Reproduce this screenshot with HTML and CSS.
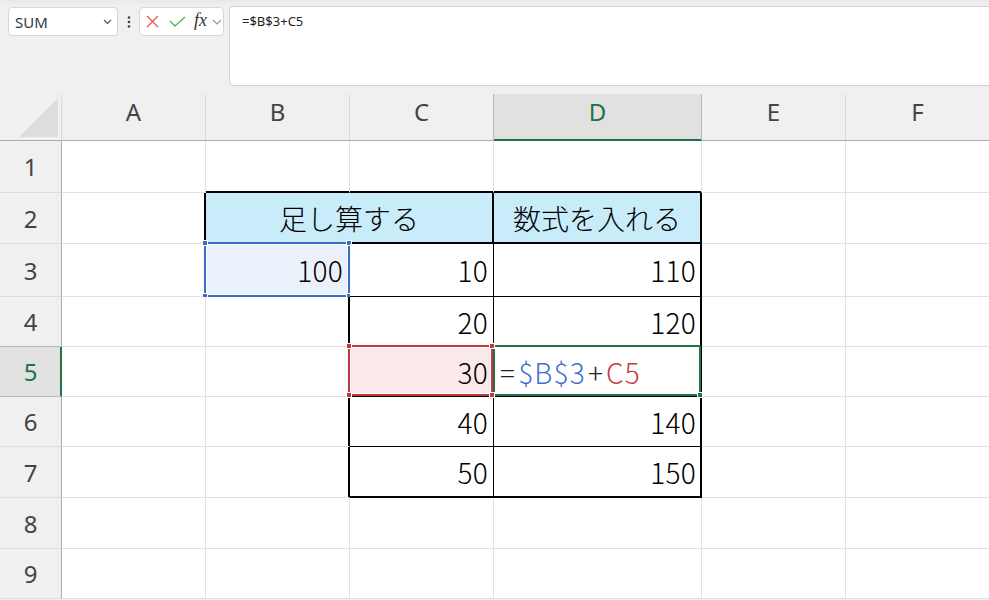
FILE: index.html
```html
<!DOCTYPE html>
<html lang="ja">
<head>
<meta charset="utf-8">
<title>Excel</title>
<link rel="stylesheet" href="styles.css">
</head>
<body>
<div class="app">
  <div class="topbar">
    <div class="namebox">
      <span class="nb-text">SUM</span>
      <svg class="chev" width="9" height="6" viewBox="0 0 9 6"><polyline points="1,1 4.5,4.5 8,1" fill="none" stroke="#555" stroke-width="1.2"/></svg>
    </div>
    <div class="dots">
      <svg width="4" height="12" viewBox="0 0 4 12"><circle cx="2" cy="1.5" r="1.3" fill="#444"/><circle cx="2" cy="6" r="1.3" fill="#444"/><circle cx="2" cy="10.5" r="1.3" fill="#444"/></svg>
    </div>
    <div class="fnbox">
      <svg class="ic-x" width="13" height="13" viewBox="0 0 13 13"><path d="M1 1 L12 12 M12 1 L1 12" stroke="#e45b5b" stroke-width="1.4" fill="none"/></svg>
      <svg class="ic-ok" width="17" height="11" viewBox="0 0 17 11"><polyline points="1,5 6,10 16,1" fill="none" stroke="#5fb363" stroke-width="1.5"/></svg>
      <span class="fx">fx</span>
      <svg class="chev2" width="10" height="6" viewBox="0 0 10 6"><polyline points="1,1 5,5 9,1" fill="none" stroke="#9a9a9a" stroke-width="1.2"/></svg>
    </div>
    <div class="formula">=$B$3+C5</div>
  </div>

  <div class="sheet">
    <!-- header row -->
    <div class="corner"><svg width="40" height="40" viewBox="0 0 40 40"><polygon points="40,0 40,40 0,40" fill="#dedede"/></svg></div>
    <div class="ch">A</div>
    <div class="ch">B</div>
    <div class="ch pre-sel">C</div>
    <div class="ch sel">D</div>
    <div class="ch">E</div>
    <div class="ch">F</div>

    <!-- row 1 -->
    <div class="rh">1</div>
    <div class="c"></div>
    <div class="c k-b t-b"></div>
    <div class="c k-b t-b"></div>
    <div class="c k-b t-b"></div>
    <div class="c"></div>
    <div class="c"></div>

    <!-- row 2 -->
    <div class="rh">2</div>
    <div class="c k-r t-r"></div>
    <div class="c hd span2 k-r k-b t-rb">足し算する</div>
    <div class="c hd k-r k-b t-rb">数式を入れる</div>
    <div class="c"></div>
    <div class="c"></div>

    <!-- row 3 -->
    <div class="rh">3</div>
    <div class="c"></div>
    <div class="c num k-r bluebg">100<span class="frame blue"><i class="h tl"></i><i class="h tr"></i><i class="h bl"></i><i class="h br"></i></span></div>
    <div class="c num k-r k-b">10</div>
    <div class="c num k-r k-b t-r">110</div>
    <div class="c"></div>
    <div class="c"></div>

    <!-- row 4 -->
    <div class="rh pre-sel">4</div>
    <div class="c"></div>
    <div class="c k-r t-r"></div>
    <div class="c num k-r k-b">20</div>
    <div class="c num k-r k-b t-r">120</div>
    <div class="c"></div>
    <div class="c"></div>

    <!-- row 5 -->
    <div class="rh sel">5</div>
    <div class="c"></div>
    <div class="c k-r t-r"></div>
    <div class="c num k-r k-b redbg">30<span class="frame red"><i class="h tl"></i><i class="h tr"></i><i class="h bl"></i><i class="h br"></i></span></div>
    <div class="c edit k-r k-b t-r"><span class="op">=</span><span class="ref-b">$B$3</span><span class="op">+</span><span class="ref-c">C5</span><span class="frame green"><i class="fill"></i></span></div>
    <div class="c"></div>
    <div class="c"></div>

    <!-- row 6 -->
    <div class="rh">6</div>
    <div class="c"></div>
    <div class="c k-r t-r"></div>
    <div class="c num k-r k-b">40</div>
    <div class="c num k-r k-b t-r">140</div>
    <div class="c"></div>
    <div class="c"></div>

    <!-- row 7 -->
    <div class="rh">7</div>
    <div class="c"></div>
    <div class="c k-r t-r"></div>
    <div class="c num k-r k-b t-b">50</div>
    <div class="c num k-r k-b t-rb">150</div>
    <div class="c"></div>
    <div class="c"></div>

    <!-- row 8 -->
    <div class="rh">8</div>
    <div class="c"></div>
    <div class="c"></div>
    <div class="c"></div>
    <div class="c"></div>
    <div class="c"></div>
    <div class="c"></div>

    <!-- row 9 -->
    <div class="rh">9</div>
    <div class="c"></div>
    <div class="c"></div>
    <div class="c"></div>
    <div class="c"></div>
    <div class="c"></div>
    <div class="c"></div>
  </div>
</div>
</body>
</html>
```

FILE: styles.css
```css
* { box-sizing: border-box; }
html, body { margin: 0; padding: 0; }
body {
  width: 989px;
  height: 600px;
  overflow: hidden;
  background: #f0f0f0;
  font-family: "Noto Sans", "Noto Sans CJK JP", sans-serif;
}
.app { width: 989px; height: 600px; overflow: hidden; }

/* ---------- top bar ---------- */
.topbar {
  height: 94px;
  display: flex;
  align-items: flex-start;
  padding-left: 8px;
  background: linear-gradient(#e9e9e9 0, #efefef 5px, #f0f0f0 6px);
}
.namebox {
  margin-top: 7px;
  width: 110px;
  height: 29px;
  background: #fff;
  border: 1px solid #d6d6d6;
  border-radius: 4px;
  display: flex;
  align-items: center;
  justify-content: space-between;
  padding: 0 5px 0 6px;
}
.nb-text { font-size: 15px; color: #2f3a4a; }
.chev { display: block; }
.dots {
  width: 21px;
  margin-top: 16px;
  display: flex;
  justify-content: center;
}
.dots svg { display: block; }
.fnbox {
  margin-top: 7px;
  width: 85px;
  height: 29px;
  background: #fff;
  border: 1px solid #d6d6d6;
  border-radius: 4px;
  display: flex;
  align-items: center;
  padding-left: 6px;
}
.ic-x { display: block; margin-right: 10px; }
.ic-ok { display: block; margin-right: 8px; }
.fx {
  font-family: "Liberation Serif", "DejaVu Serif", serif;
  font-style: italic;
  font-size: 18px;
  color: #333;
  margin-right: 5px;
  line-height: 1;
  margin-top: -3px;
}
.chev2 { display: block; }
.formula {
  margin-top: 6px;
  margin-left: 5px;
  margin-right: -10px;
  flex: 1;
  height: 80px;
  background: #fff;
  border: 1px solid #d0d0d0;
  border-radius: 4px;
  padding: 5px 0 0 12px;
  font-size: 13px;
  color: #222;
}

/* ---------- sheet ---------- */
.sheet {
  display: grid;
  grid-template-columns: 62px 144px 144px 144px 208px 144px 144px;
  grid-template-rows: 47px 52px 51px 53px 50px 50px 50px 51px 51px 50px;
  width: 990px;
}
.corner {
  background: #f0f0f0;
  border-bottom: 1px solid #ababab;
  border-right: 1px solid #dadada;
  display: flex;
  justify-content: flex-end;
  align-items: flex-end;
  padding: 0 3px 3px 0;
}
.corner svg { display: block; width: 39px; height: 39px; }
.ch {
  background: #f0f0f0;
  border-right: 1px solid #dadada;
  border-bottom: 1px solid #ababab;
  display: flex;
  justify-content: center;
  align-items: center;
  padding-bottom: 12px;
  font-size: 24px;
  color: #444;
}
.ch.pre-sel { border-right-color: #b8b8b8; }
.ch.sel {
  background: #e1e1e1;
  color: #217346;
  border-right-color: #b8b8b8;
  border-bottom-color: #217346;
  box-shadow: inset 0 -1px 0 #217346;
}
.rh {
  background: #f0f0f0;
  border-right: 1px solid #ababab;
  border-bottom: 1px solid #dcdcdc;
  display: flex;
  justify-content: center;
  align-items: center;
  font-size: 24px;
  color: #444;
}
.rh.pre-sel { border-bottom-color: #b8b8b8; }
.rh.sel {
  background: #e1e1e1;
  color: #217346;
  border-bottom-color: #b8b8b8;
  border-right-color: #217346;
  box-shadow: inset -1px 0 0 #217346;
}

.c {
  position: relative;
  background: #fff;
  border-right: 1px solid #e1e1e1;
  border-bottom: 1px solid #e1e1e1;
  display: flex;
  align-items: center;
  padding: 0 5px 0 4px;
  font-family: "Noto Sans CJK JP", sans-serif;
  font-weight: 300;
  font-size: 28px;
  color: #000;
  white-space: nowrap;
}
.span2 { grid-column: span 2; }
.num { justify-content: flex-end; letter-spacing: 0.3px; }
.hd { justify-content: center; background: #c9ecfa; }
.k-r { border-right-color: #000; }
.k-b { border-bottom-color: #000; }
.t-r { box-shadow: inset -1px 0 0 #000; }
.t-b { box-shadow: inset 0 -1px 0 #000; }
.t-rb { box-shadow: inset -1px 0 0 #000, inset 0 -1px 0 #000; }
.num.t-r, .num.t-rb { padding-right: 5px; }

.bluebg { background: #ebf1fa; padding-right: 6px; }
.redbg { background: #f9e9ea; }

.edit { justify-content: flex-start; padding-left: 4px; letter-spacing: 1.2px; }
.op { color: #222; padding: 0 2px; }
.ref-b { color: #3d71cc; }
.ref-c { color: #c8393c; }

/* selection frames overlaying cells */
.frame {
  position: absolute;
  border: 2px solid;
  pointer-events: none;
}
.frame.blue {
  top: -2px; left: -2px; right: -1px; bottom: -1px;
  border-color: #3a6ec6;
  box-shadow: inset 0 0 0 1px #fff;
}
.frame.red {
  top: -2px; left: -2px; right: 0; bottom: 0;
  border-color: #c3393d;
  box-shadow: inset 0 0 0 1px #fff;
  z-index: 2;
}
.frame.green {
  top: -2px; left: -1px; right: 0; bottom: 0;
  border-color: #217346;
  z-index: 1;
}
.h {
  position: absolute;
  width: 6px;
  height: 6px;
  border: 1px solid #fff;
}
.blue .h { background: #3a6ec6; }
.red .h { background: #c3393d; }
.h.tl { left: -4px; top: -4px; }
.h.tr { right: -4px; top: -4px; }
.h.bl { left: -4px; bottom: -4px; }
.h.br { right: -4px; bottom: -4px; }
.fill {
  position: absolute;
  right: -4px;
  bottom: -4px;
  width: 6px;
  height: 6px;
  background: #217346;
  border: 1px solid #fff;
}
```
